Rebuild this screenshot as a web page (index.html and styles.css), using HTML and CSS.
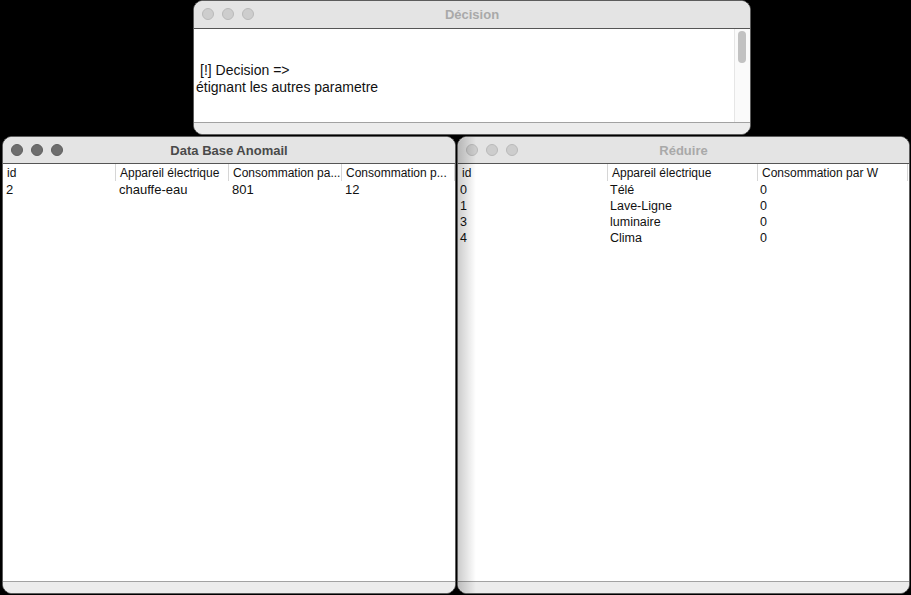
FILE: index.html
```html
<!DOCTYPE html>
<html lang="fr">
<head>
<meta charset="utf-8">
<title>Fenêtres</title>
<link rel="stylesheet" href="styles.css">
</head>
<body>
<div class="desktop">
  <section class="window win-decision">
    <header class="titlebar inactive">
      <div class="lights"><span></span><span></span><span></span></div>
      <h1 class="title">Décision</h1>
    </header>
    <div class="content log">
      <div class="log-text">
        <p class="l1">[!] Decision =&gt;</p>
        <p class="l2">étignant les autres parametre</p>
      </div>
      <div class="scrollbar"><div class="thumb"></div></div>
    </div>
    <footer class="footbar"></footer>
  </section>

  <section class="window win-db">
    <header class="titlebar active">
      <div class="lights"><span></span><span></span><span></span></div>
      <h1 class="title">Data Base Anomail</h1>
    </header>
    <div class="content">
      <div class="table cols4">
        <div class="th">id</div>
        <div class="th">Appareil électrique</div>
        <div class="th">Consommation pa...</div>
        <div class="th">Consommation p...</div>
        <div class="td">2</div>
        <div class="td">chauffe-eau</div>
        <div class="td">801</div>
        <div class="td">12</div>
      </div>
    </div>
    <footer class="footbar"></footer>
  </section>

  <section class="window win-reduire">
    <header class="titlebar inactive">
      <div class="lights"><span></span><span></span><span></span></div>
      <h1 class="title">Réduire</h1>
    </header>
    <div class="content">
      <div class="table cols3">
        <div class="th">id</div>
        <div class="th">Appareil électrique</div>
        <div class="th">Consommation par W</div>
        <div class="td">0</div><div class="td">Télé</div><div class="td">0</div>
        <div class="td">1</div><div class="td">Lave-Ligne</div><div class="td">0</div>
        <div class="td">3</div><div class="td">luminaire</div><div class="td">0</div>
        <div class="td">4</div><div class="td">Clima</div><div class="td">0</div>
      </div>
    </div>
    <footer class="footbar"></footer>
    <div class="shadow"></div>
  </section>
</div>
</body>
</html>
```

FILE: styles.css
```css
* { box-sizing: border-box; }
html, body {
  margin: 0;
  padding: 0;
  background: #000;
}
.desktop {
  position: relative;
  width: 911px;
  height: 595px;
  background: #000;
  overflow: hidden;
  font-family: "Liberation Sans", "DejaVu Sans", sans-serif;
}
.window {
  position: absolute;
  display: flex;
  flex-direction: column;
  background: #fff;
  border-radius: 10px;
  overflow: hidden;
  border: 1px solid #5c5c5c;
}
.win-decision { left: 193px; top: 0; width: 558px; height: 135px; }
.win-db { left: 2px; top: 136px; width: 454px; height: 458px; }
.win-reduire { left: 457px; top: 136px; width: 453px; height: 458px; }

.titlebar {
  position: relative;
  height: 28px;
  flex: none;
  background: #e4e4e4;
  border-bottom: 1px solid #555;
  display: flex;
  align-items: center;
  justify-content: center;
}
.win-db .titlebar, .win-reduire .titlebar { height: 27px; }
.lights {
  position: absolute;
  left: 8px;
  top: 7px;
  display: flex;
  gap: 8px;
}
.lights span {
  width: 12px;
  height: 12px;
  border-radius: 50%;
  background: #cdcdcd;
  border: 1px solid #b9b9b9;
}
.active .lights span {
  background: #6e6e6e;
  border-color: #5f5f5f;
}
.title {
  margin: 0;
  font-size: 13px;
  font-weight: bold;
  color: #a9a9a9;
}
.active .title { color: #4a4a4a; }

.content {
  flex: 1;
  position: relative;
  background: #fff;
}
.footbar {
  flex: none;
  height: 12px;
  background: #ececec;
  border-top: 1px solid #a2a2a2;
}

.log {
  display: flex;
}
.log-text {
  flex: 1;
  padding-top: 33px;
  font-size: 14px;
  color: #111;
}
.log-text p { margin: 0; line-height: 17px; }
.log-text .l1 { padding-left: 6px; }
.log-text .l2 { padding-left: 2px; }
.scrollbar {
  width: 16px;
  flex: none;
  background: #fafafa;
  border-left: 1px solid #e6e6e6;
  padding: 2px 3px 0 3px;
}
.thumb {
  width: 8px;
  height: 32px;
  border-radius: 4px;
  background: #c2c2c2;
}

.table {
  display: grid;
  font-size: 12px;
  color: #111;
}
.cols4 { grid-template-columns: 113px 113px 113px 113px; }
.cols3 { grid-template-columns: 150px 150px 150px; }
.th {
  height: 17px;
  line-height: 17px;
  padding-top: 1px;
  font-size: 12px;
  padding-left: 4px;
  border-right: 1px solid #d6d6d6;
  white-space: nowrap;
  overflow: hidden;
}
.td {
  height: 16px;
  line-height: 18px;
  padding-left: 3px;
  font-size: 13px;
  white-space: nowrap;
}
.cols3 .td { padding-left: 2px; font-size: 12.5px; }

.shadow {
  position: absolute;
  left: 0;
  top: 0;
  bottom: 0;
  width: 18px;
  background: linear-gradient(to right, rgba(0,0,0,0.2), rgba(0,0,0,0));
  pointer-events: none;
}
```
